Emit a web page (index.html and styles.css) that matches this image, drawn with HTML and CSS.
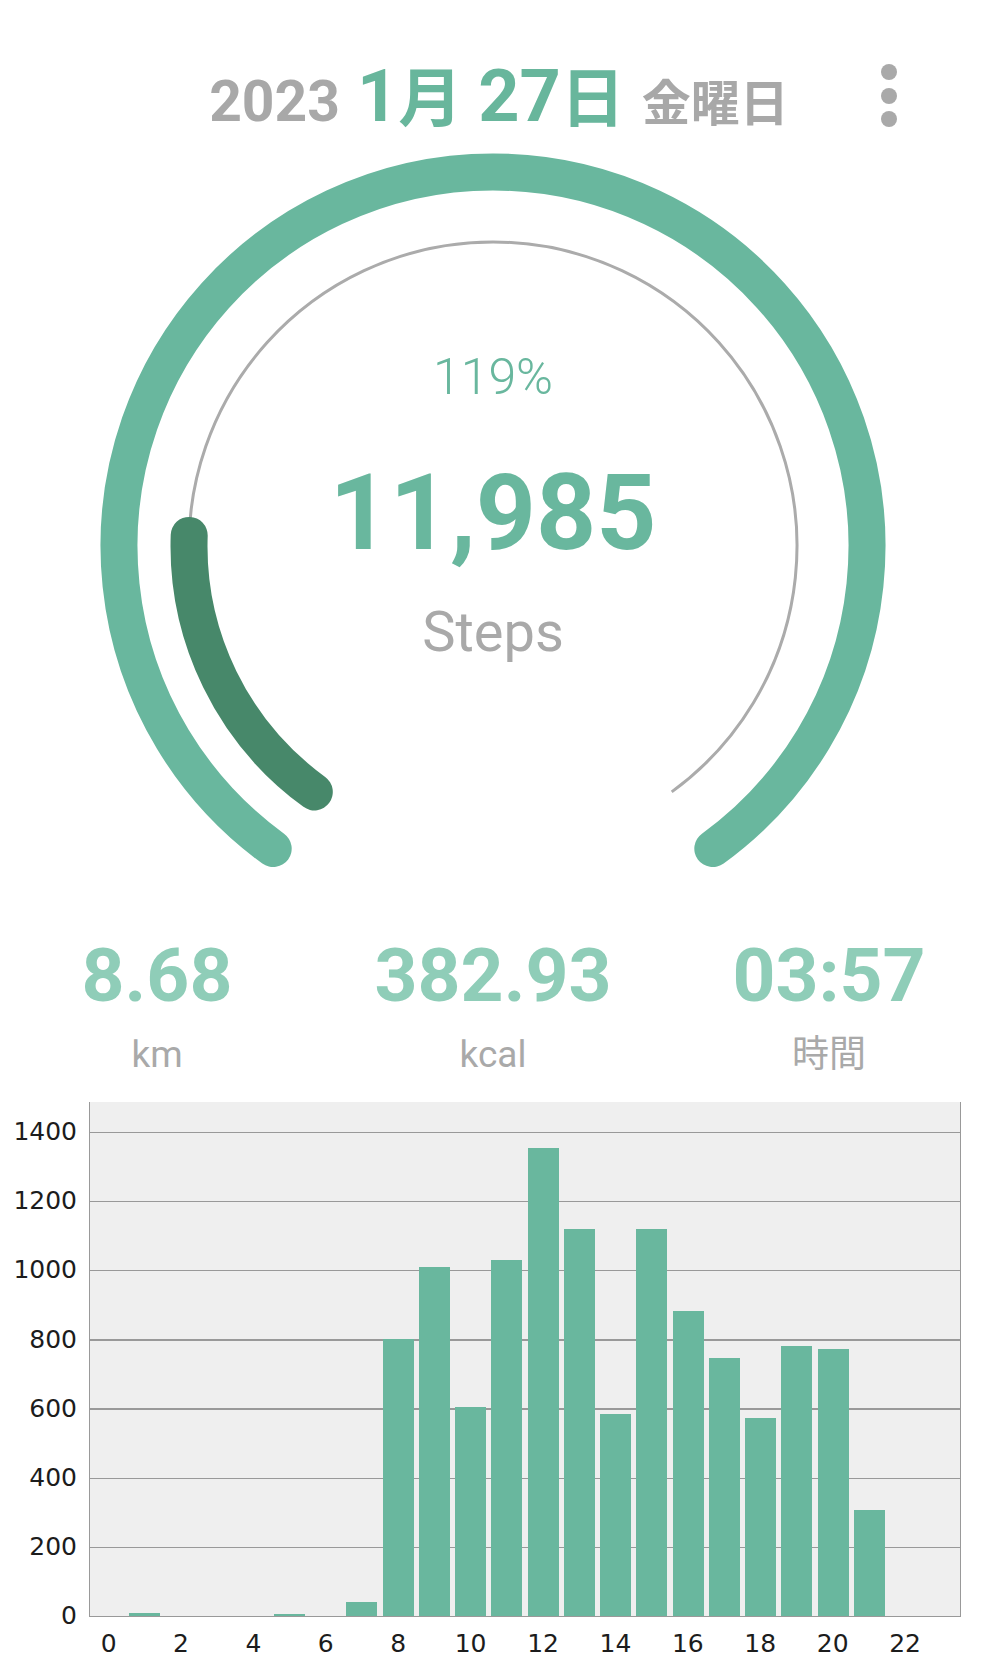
FILE: index.html
```html
<!DOCTYPE html>
<html lang="ja">
<head>
    <meta charset="UTF-8">
    <meta name="viewport" content="width=device-width, initial-scale=1.0">
    <title>歩数</title>
    <link rel="stylesheet" href="styles.css">
</head>
<body>

    <!-- Date header -->
    <header class="top-bar">
        <div class="date">
            <span class="year">2023</span>
            <span class="day"><span class="num">1</span>月 <span class="num">27</span>日</span>
            <span class="weekday">金曜日</span>
        </div>
        <button class="menu" aria-label="menu"><span></span><span></span><span></span></button>
    </header>

    <!-- Step gauge -->
    <section class="gauge">
        <svg class="gauge-ring" width="800" height="730" viewBox="0 0 800 730">
            <path d="M 180.2 702.6 A 374 374 0 1 1 619.8 702.6" class="ring-outer"/>
            <path d="M 221.3 645.9 A 304 304 0 1 1 578.7 645.9" class="ring-track"/>
            <path d="M 221.3 645.9 A 304 304 0 0 1 96.2 389.4" class="ring-extra"/>
        </svg>
        <div class="gauge-text">
            <div class="percent">119%</div>
            <div class="steps">11,985</div>
            <div class="steps-label">Steps</div>
        </div>
    </section>

    <!-- Summary -->
    <section class="stats">
        <div class="stat">
            <div class="stat-value">8.68</div>
            <div class="stat-unit">km</div>
        </div>
        <div class="stat">
            <div class="stat-value">382.93</div>
            <div class="stat-unit">kcal</div>
        </div>
        <div class="stat">
            <div class="stat-value">03:57</div>
            <div class="stat-unit">時間</div>
        </div>
    </section>

    <!-- Hourly chart -->
    <section class="chart">
        <div class="y-axis">
            <span>1400</span>
            <span>1200</span>
            <span>1000</span>
            <span>800</span>
            <span>600</span>
            <span>400</span>
            <span>200</span>
            <span>0</span>
        </div>
        <div class="plot">
            <div class="slot"></div>
            <div class="slot"><div class="bar" style="height: 0.54%"></div></div>
            <div class="slot"></div>
            <div class="slot"></div>
            <div class="slot"></div>
            <div class="slot"><div class="bar" style="height: 0.34%"></div></div>
            <div class="slot"></div>
            <div class="slot"><div class="bar" style="height: 2.63%"></div></div>
            <div class="slot"><div class="bar" style="height: 53.91%"></div></div>
            <div class="slot"><div class="bar" style="height: 67.86%"></div></div>
            <div class="slot"><div class="bar" style="height: 40.63%"></div></div>
            <div class="slot"><div class="bar" style="height: 69.34%"></div></div>
            <div class="slot"><div class="bar" style="height: 90.97%"></div></div>
            <div class="slot"><div class="bar" style="height: 75.20%"></div></div>
            <div class="slot"><div class="bar" style="height: 39.22%"></div></div>
            <div class="slot"><div class="bar" style="height: 75.34%"></div></div>
            <div class="slot"><div class="bar" style="height: 59.37%"></div></div>
            <div class="slot"><div class="bar" style="height: 50.13%"></div></div>
            <div class="slot"><div class="bar" style="height: 38.48%"></div></div>
            <div class="slot"><div class="bar" style="height: 52.49%"></div></div>
            <div class="slot"><div class="bar" style="height: 51.89%"></div></div>
            <div class="slot"><div class="bar" style="height: 20.55%"></div></div>
            <div class="slot"></div>
            <div class="slot"></div>
        </div>
        <div class="x-axis">
            <span>0</span><span></span><span>2</span><span></span>
            <span>4</span><span></span><span>6</span><span></span>
            <span>8</span><span></span><span>10</span><span></span>
            <span>12</span><span></span><span>14</span><span></span>
            <span>16</span><span></span><span>18</span><span></span>
            <span>20</span><span></span><span>22</span><span></span>
        </div>
    </section>

</body>
</html>
```

FILE: styles.css
```css
body, html {
    margin: 0;
    padding: 0;
    background: #fff;
    font-family: Roboto, "Noto Sans CJK JP", sans-serif;
}

/* header */
.top-bar {
    display: grid;
    grid-template-columns: 1fr auto 1fr;
    align-items: start;
    height: 146px;
    box-sizing: border-box;
    padding-top: 61px;
}

.date {
    grid-column: 2;
    display: flex;
    align-items: baseline;
    gap: 17px;
    padding-left: 12px;
    font-weight: bold;
    line-height: 1;
    white-space: nowrap;
}

.year {
    font-size: 57px;
    color: #a8a8a8;
}

.day {
    font-size: 64px;
    color: #68b69c;
}

.day .num {
    font-size: 72px;
}

.weekday {
    font-size: 49px;
    color: #a8a8a8;
}

.menu {
    grid-column: 3;
    justify-self: end;
    margin: 3px 89px 0 0;
    padding: 0;
    border: none;
    background: none;
    display: flex;
    flex-direction: column;
    gap: 7.5px;
}

.menu span {
    width: 16px;
    height: 16px;
    border-radius: 50%;
    background: #a9a9a9;
}

/* gauge */
.gauge {
    display: grid;
    width: 800px;
    height: 730px;
    margin: 0 auto;
}

.gauge > * {
    grid-area: 1 / 1;
}

.gauge-ring path {
    fill: none;
}

.ring-outer {
    stroke: #69b79e;
    stroke-width: 37;
    stroke-linecap: round;
}

.ring-track {
    stroke: #ababab;
    stroke-width: 3;
}

.ring-extra {
    stroke: #47886a;
    stroke-width: 37;
    stroke-linecap: round;
}

.gauge-text {
    display: flex;
    flex-direction: column;
    align-items: center;
    padding-top: 206px;
}

.percent {
    font-size: 50px;
    font-weight: 300;
    line-height: 50px;
    color: #69b79e;
}

.steps {
    margin-top: 59px;
    font-size: 105px;
    font-weight: bold;
    line-height: 105px;
    color: #69b79e;
}

.steps-label {
    margin-top: 38px;
    font-size: 56px;
    line-height: 56px;
    color: #a9a9a9;
}

/* summary */
.stats {
    display: grid;
    grid-template-columns: repeat(3, 300px);
    column-gap: 36px;
    justify-content: center;
    margin-top: 62px;
}

.stat {
    display: flex;
    flex-direction: column;
    align-items: center;
}

.stat-value {
    font-size: 75px;
    font-weight: bold;
    line-height: 74px;
    color: #8fcdb8;
}

.stat-unit {
    margin-top: 24px;
    font-size: 37px;
    line-height: 37px;
    color: #a9a9a9;
}

/* chart */
.chart {
    display: grid;
    grid-template-columns: 89px 872px;
    margin-top: 29px;
    font-family: "DejaVu Sans", sans-serif;
    font-size: 25px;
    color: #1c1c1c;
}

.y-axis {
    display: flex;
    flex-direction: column;
    margin: -4.9px 0 -34.7px;
    padding-right: 12px;
    text-align: right;
}

.y-axis span {
    height: 69.2px;
    line-height: 69.2px;
}

.plot {
    height: 514px;
    display: flex;
    align-items: flex-end;
    border-left: 1.5px solid #999;
    border-right: 1.5px solid #999;
    border-bottom: 1.5px solid #999;
    background-color: #efefef;
    background-image: repeating-linear-gradient(to top, transparent 0 67.7px, #999 67.7px 69.2px);
}

.slot {
    flex: 1;
    height: 100%;
    display: flex;
    align-items: flex-end;
    justify-content: center;
}

.bar {
    width: 85%;
    background: #69b79e;
}

.x-axis {
    grid-column: 2;
    display: flex;
    padding: 12px 1.5px 0;
}

.x-axis span {
    flex: 1;
    text-align: center;
    line-height: 30px;
    white-space: nowrap;
}
```
